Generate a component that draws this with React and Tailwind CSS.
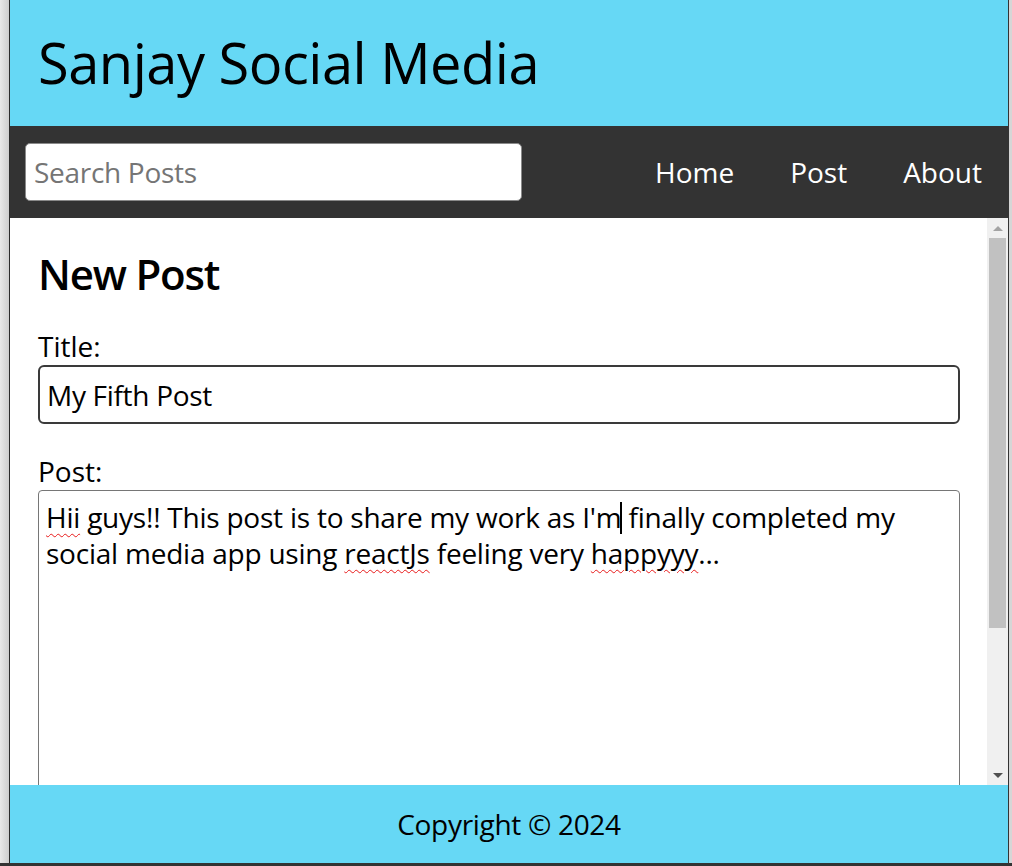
import React from 'react';

const font = { fontFamily: '"Open Sans", "Noto Sans", sans-serif' };

const Header = () => (
  <header className="h-[126px] shrink-0 bg-[#66d8f5] px-[28px] pt-[24px]">
    <h1 className="text-[56px] leading-[76px] font-normal tracking-[-0.5px] text-black">Sanjay Social Media</h1>
  </header>
);

const Nav = () => (
  <nav className="h-[92px] shrink-0 bg-[#333333] flex items-center justify-between pl-[15px] pr-[26px]">
    <input
      type="text"
      placeholder="Search Posts"
      className="w-[497px] h-[58px] bg-white rounded-[5px] border border-[#8a8a8a] px-[8px] text-[28px] tracking-[-0.3px] text-black placeholder:text-[#757575] outline-none"
    />
    <ul className="flex items-center gap-[56px] text-white text-[28px] leading-[38px]">
      <li>Home</li>
      <li>Post</li>
      <li>About</li>
    </ul>
  </nav>
);

const Misspelled = ({ children }) => (
  <span className="underline decoration-wavy decoration-[#e81b1b] decoration-[1px] underline-offset-[5px]">{children}</span>
);

const NewPost = () => (
  <div className="flex-1 min-w-0 overflow-hidden pl-[28px] pr-[27px] pt-[27px]">
    <h2 className="text-[42px] leading-[57px] font-semibold tracking-[-1.2px] text-black">New Post</h2>
    <form className="mt-[25px] flex flex-col text-[28px] leading-[38px] text-black">
      <label htmlFor="postTitle">Title:</label>
      <input
        id="postTitle"
        type="text"
        defaultValue="My Fifth Post"
        className="h-[59px] w-full rounded-[6px] border-2 border-[#3a3a3a] pl-[7px] pr-[7px] pt-[1px] text-[28px] tracking-[-0.3px] outline-none"
      />
      <label htmlFor="postBody" className="mt-[28px]">Post:</label>
      <div
        id="postBody"
        className="h-[340px] w-full rounded-[4px] border border-[#767676] pt-[8px] px-[7px] text-[28px] leading-[36px] tracking-[-0.23px]"
      >
        <Misspelled>Hii</Misspelled> guys!! This post is to share my work as I'm
        <span className="inline-block w-[2px] h-[32px] bg-black align-[-6px] -ml-[1px] mr-[-1px]"></span>{' '}
        finally completed my social media app using <Misspelled>reactJs</Misspelled> feeling very{' '}
        <Misspelled>happyyy</Misspelled>...
      </div>
    </form>
  </div>
);

const ScrollBar = () => (
  <div className="w-[21px] shrink-0 bg-[#f0f0f0] flex flex-col items-center">
    <div className="h-[20px] flex items-center justify-center">
      <div className="w-0 h-0 border-l-[5px] border-r-[5px] border-b-[5px] border-l-transparent border-r-transparent border-b-[#a3a3a3]"></div>
    </div>
    <div className="w-[17px] h-[390px] bg-[#c1c1c1]"></div>
    <div className="flex-1"></div>
    <div className="h-[20px] flex items-center justify-center">
      <div className="w-0 h-0 border-l-[5px] border-r-[5px] border-t-[5px] border-l-transparent border-r-transparent border-t-[#505050]"></div>
    </div>
  </div>
);

const Footer = () => (
  <footer className="h-[78px] shrink-0 bg-[#66d8f5] flex items-center justify-center">
    <p className="text-[28px] leading-[38px] tracking-[-0.3px] text-black">Copyright © 2024</p>
  </footer>
);

export default function App() {
  return (
    <div className="w-[1012px] h-[866px] flex flex-col bg-[#333333] overflow-hidden" style={font}>
      <div className="h-[863px] flex">
        <div className="w-[9px] bg-gradient-to-r from-[#e8e8e8] to-[#cdcdcd]"></div>
        <div className="w-[1px] bg-[#2b2b2b]"></div>
        <div className="w-[998px] flex flex-col">
          <Header />
          <Nav />
          <main className="h-[567px] shrink-0 bg-white flex">
            <NewPost />
            <ScrollBar />
          </main>
          <Footer />
        </div>
        <div className="w-[1px] bg-[#333333]"></div>
        <div className="w-[3px] bg-[#d6d6d6]"></div>
      </div>
      <div className="flex-1 bg-[#333333]"></div>
    </div>
  );
}
